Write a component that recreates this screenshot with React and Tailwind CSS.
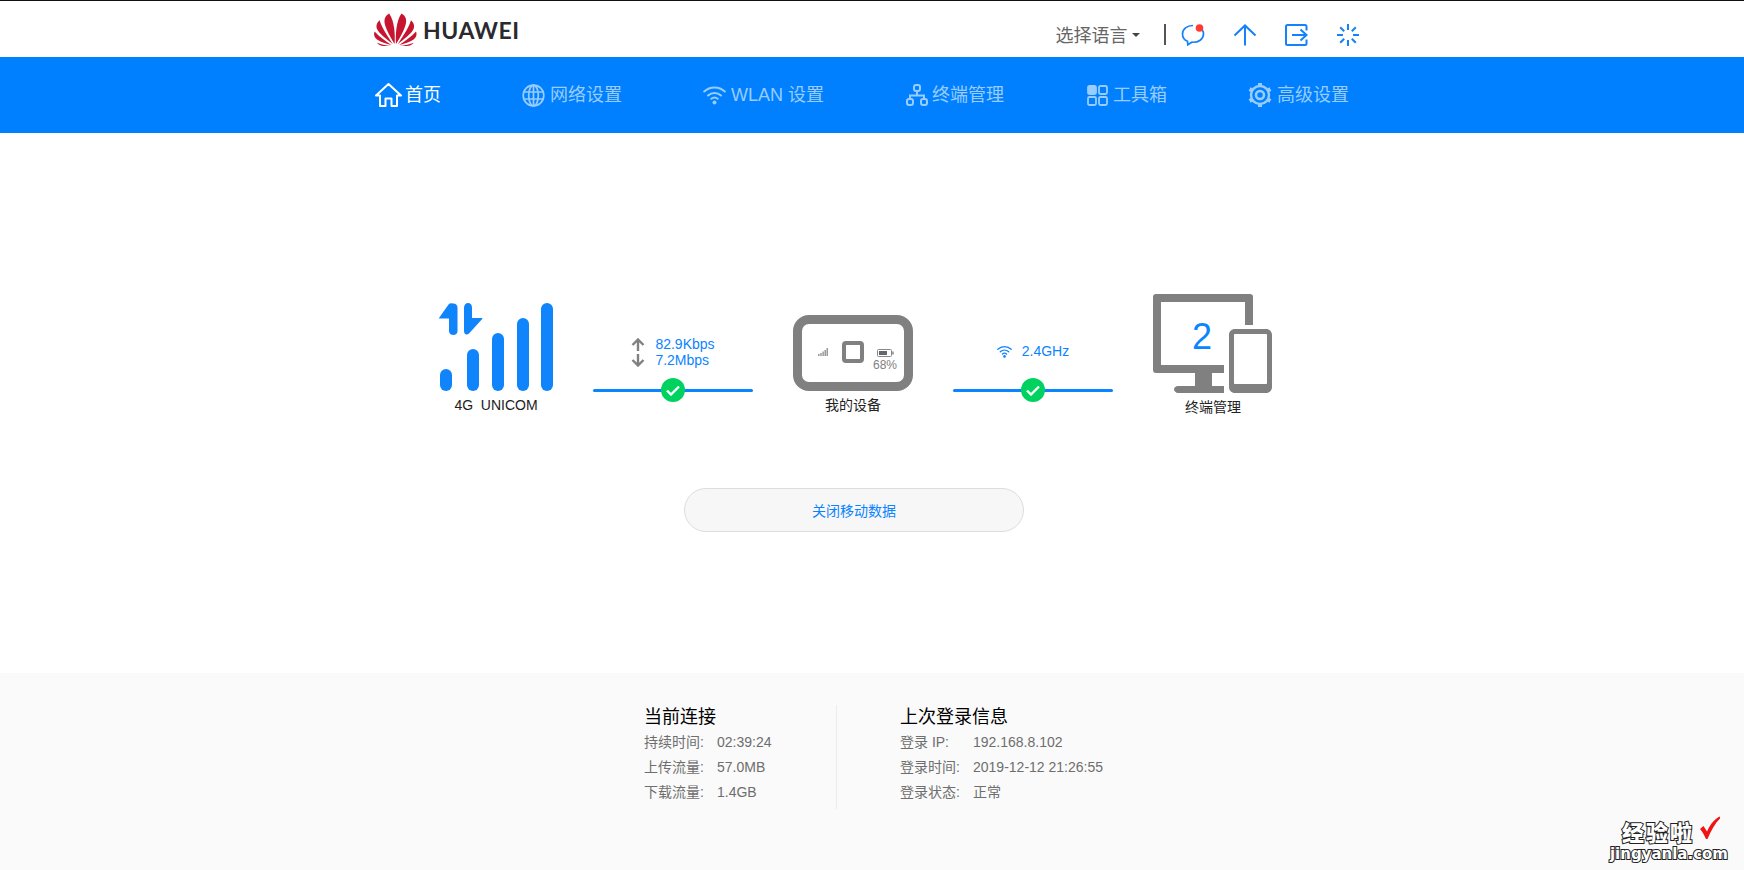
import React from "react";

const FONT = "[font-family:'Liberation_Sans','Noto_Sans_CJK_SC',sans-serif]";

const HuaweiLogo = () => (
  <svg width="43" height="33" viewBox="0 0 43 33" fill="#c7152f">
    <g>
      <path d="M20.6 31C21.2 22 20.6 8 15.2.4C12 1.8 9.7 5.5 10.7 10.5C11.8 16 17 25.500 20.600 31Z" />
      <path d="M18.800 31.200C15 25 8.500 16.500 5.600 7.300C2.800 9.600 1.600 13 3.300 16.600C5.500 21 13 26.500 18.800 31.200Z" />
      <path d="M17.400 32C12.500 28.500 5.400 24 .6 18.400C-.6 21.200.3 24.400 3 26.400C6.500 29 12.500 30.800 17.400 32Z" />
      <path d="M16.500 32.800C11.500 32.300 6.500 31.400 2.900 29.800C4.200 31.800 7 33 10 32.900C12 32.900 14.500 32.900 16.500 32.800Z" />
    </g>
    <g transform="translate(42.600 0) scale(-1 1)">
      <path d="M20.6 31C21.2 22 20.6 8 15.2.4C12 1.8 9.700 5.500 10.700 10.500C11.800 16 17 25.500 20.600 31Z" />
      <path d="M18.800 31.200C15 25 8.500 16.500 5.600 7.300C2.800 9.600 1.600 13 3.300 16.600C5.500 21 13 26.500 18.800 31.200Z" />
      <path d="M17.400 32C12.500 28.500 5.400 24 .6 18.400C-.6 21.200.3 24.400 3 26.400C6.500 29 12.500 30.800 17.400 32Z" />
      <path d="M16.500 32.800C11.500 32.300 6.500 31.400 2.900 29.800C4.200 31.800 7 33 10 32.900C12 32.900 14.500 32.900 16.500 32.800Z" />
    </g>
  </svg>
);

const HomeIcon = () => (
  <svg width="27" height="24" viewBox="0 0 27 24" fill="none" stroke="currentColor" strokeWidth="2" strokeLinejoin="round">
    <path d="M1 12.500L13.500 1L26 12.500H22V23H16.500V15.500H10.500V23H5V12.500Z" />
  </svg>
);

const GlobeIcon = () => (
  <svg width="23" height="23" viewBox="0 0 23 23" fill="none" stroke="currentColor" strokeWidth="1.700">
    <circle cx="11.500" cy="11.500" r="10.300" />
    <ellipse cx="11.500" cy="11.500" rx="4.800" ry="10.300" />
    <path d="M11.500 1.200V21.800M1.800 8H21.200M1.800 15H21.200" />
  </svg>
);

const WifiIcon = ({ size = 23 }) => (
  <svg width={size} height={size * 0.87} viewBox="0 0 23 20" fill="none" stroke="currentColor" strokeWidth="2" strokeLinecap="round">
    <path d="M1.200 6.500C7 1 16 1 21.800 6.500" />
    <path d="M5 10.500C8.800 7 14.200 7 18 10.500" />
    <path d="M8.300 13.800C10.200 12.300 12.800 12.300 14.700 13.800" />
    <circle cx="11.500" cy="17.500" r="2" fill="currentColor" stroke="none" />
  </svg>
);

const TerminalIcon = () => (
  <svg className="ml-[1px]" width="22" height="22" viewBox="0 0 22 22" fill="none" stroke="currentColor" strokeWidth="2">
    <rect x="8" y="1" width="6" height="6" rx="2" />
    <rect x="1" y="15" width="6" height="6" rx="2" />
    <rect x="15" y="15" width="6" height="6" rx="2" />
    <path d="M11 7V11.500M4 15V11.500H18V15" />
  </svg>
);

const ToolsIcon = () => (
  <svg className="ml-[2px]" width="21" height="21" viewBox="0 0 21 21" fill="none" stroke="currentColor" strokeWidth="1.800">
    <rect x="1" y="1" width="8" height="8" rx="1.500" fill="currentColor" />
    <rect x="12" y="1" width="8" height="8" rx="1.500" />
    <rect x="1" y="12" width="8" height="8" rx="1.500" />
    <rect x="12" y="12" width="8" height="8" rx="1.500" />
  </svg>
);

const GearIcon = () => (
  <svg width="24" height="24" viewBox="0 0 24 24" fill="none" stroke="currentColor">
    <circle cx="12" cy="12" r="9" strokeWidth="2.400" />
    <circle cx="12" cy="12" r="4" strokeWidth="2.600" />
    <path strokeWidth="4" d="M12 0V3.500M12 20.500V24M1.600 6L4.600 7.700M19.400 16.300L22.400 18M1.600 18L4.600 16.300M19.400 7.700L22.400 6" />
  </svg>
);

const navItems = [
  { label: "首页", icon: <HomeIcon />, active: true, gap: "gap-[3px]" },
  { label: "网络设置", icon: <GlobeIcon />, gap: "gap-[5px]" },
  { label: "WLAN 设置", icon: <WifiIcon />, gap: "gap-[5px]" },
  { label: "终端管理", icon: <TerminalIcon />, gap: "gap-[4px]" },
  { label: "工具箱", icon: <ToolsIcon />, gap: "gap-[5px]" },
  { label: "高级设置", icon: <GearIcon />, gap: "gap-[5px]" },
];

const Header = () => (
  <header className="h-[57px] border-t border-[#111] bg-white">
    <div className="mx-auto flex h-[56px] w-[996px] items-center">
      <div className="flex items-center gap-[6px]">
        <HuaweiLogo />
        <span className="mt-[3px] font-['Lato',sans-serif] text-[23px] leading-none font-bold tracking-[0.5px] text-[#2a2a2e]">HUAWEI</span>
      </div>
      <div className="mt-[11px] ml-[536px] flex items-center">
        <span className="mt-[3px] text-[18px] text-[#666]">选择语言</span>
        <span className="mt-[1px] ml-[5px] h-0 w-0 border-x-[4px] border-t-[4px] border-x-transparent border-t-[#444]" />
        <span className="mt-[-1px] ml-[24px] h-[21px] w-[2px] bg-[#555]" />
        <div className="ml-[15px] flex items-center gap-[28px] text-[#1482fa]">
          <svg width="24" height="22" viewBox="0 0 24 22" fill="none" stroke="currentColor" strokeWidth="1.700">
            <path d="M12 1.500C6 1.500 1.500 5 1.500 10C1.500 13.500 3.500 16 6.500 17.300L6.800 20.800L10.800 18.200C17.500 18.800 22.500 15 22.500 10C22.500 8.500 22 7 21.300 6" />
            <circle cx="18.500" cy="4" r="3.800" fill="#ff3b30" stroke="none" />
          </svg>
          <svg width="24" height="22" viewBox="0 0 24 22" fill="none" stroke="currentColor" strokeWidth="2">
            <path d="M12 21.500V1.500M1.500 11.500L12 1.500L22.500 11.500" />
          </svg>
          <svg width="23" height="22" viewBox="0 0 23 22" fill="none" stroke="currentColor" strokeWidth="2">
            <path d="M21.500 6.500V2.500C21.500 1.700 21 1 20 1H2.500C1.700 1 1 1.700 1 2.500V19.500C1 20.300 1.700 21 2.500 21H20C21 21 21.500 20.300 21.500 19.500V15.500" />
            <path d="M7 11H21.500M15.500 5.500L21.500 11L15.500 16.500" />
          </svg>
          <svg className="ml-[1px]" width="22" height="22" viewBox="0 0 22 22" fill="none" stroke="currentColor" strokeWidth="2">
            <path d="M11 0V6M11 16V22M0 11H6M16 11H22M3.200 3.200L7.200 7.200M14.800 14.800L18.800 18.800M3.200 18.800L7.200 14.800M14.800 7.200L18.800 3.200" />
          </svg>
        </div>
      </div>
    </div>
  </header>
);

const Nav = () => (
  <nav className="h-[76px] bg-[#0080ff]">
    <div className="mx-auto flex h-full w-[996px] items-center gap-[81px] pl-[1px]">
      {navItems.map((item) => (
        <div
          key={item.label}
          className={`flex items-center ${item.gap} text-[18px] whitespace-nowrap ${item.active ? "text-white" : "text-[#99ccff]"}`}
        >
          {item.icon}
          <span>{item.label}</span>
        </div>
      ))}
    </div>
  </nav>
);

const SignalIcon = () => (
  <svg width="115" height="88" viewBox="0 0 115 88" fill="#1084fb">
    <path d="M0 15L9.500 1.500C10.500 .3 12 0 13.500.5C16.500 0 18.500 2 18.500 4.500V28C18.500 30.500 16.500 32 14.500 32C12 32 10 30.500 10 28V15.500H1C0 15.500-.3 15.200 0 15Z" />
    <path d="M25 4.500C25 2 27 0 29 0C31.500 0 33 2 33 4.500V15H43C43.500 15 43.500 15.500 43.200 16L30 30.500C28.500 32 25 32 25 28Z" />
    <rect x="1" y="66" width="12" height="22" rx="6" />
    <rect x="28" y="46" width="12" height="42" rx="6" />
    <rect x="53" y="30" width="12" height="58" rx="6" />
    <rect x="78" y="15" width="12" height="73" rx="6" />
    <rect x="102" y="0" width="12" height="88" rx="6" />
  </svg>
);

const LinkLine = ({ children }) => (
  <div className="w-[160px]">
    <div className="flex h-[46px] items-center justify-center">{children}</div>
    <div className="relative mt-[14px] h-[3px] rounded-full bg-[#0a84ff]">
      <span className="absolute top-[-11px] left-[68px] flex h-6 w-6 items-center justify-center rounded-full bg-[#00d25f]">
        <svg width="14" height="11" viewBox="0 0 14 11" fill="none" stroke="#fff" strokeWidth="2.400">
          <path d="M1 5.500L5 9.500L13 1.500" />
        </svg>
      </span>
    </div>
  </div>
);

const StatusRow = () => (
  <div className="flex items-start">
    <div className="flex w-[114px] flex-col items-center pt-[9px]">
      <SignalIcon />
      <span className="mt-[4px] text-[14px] whitespace-pre text-[#222]">4G  UNICOM</span>
    </div>

    <div className="ml-[40px] pt-[35px]">
      <LinkLine>
        <div className="grid grid-cols-[auto_auto] items-center gap-x-[10px] text-[14px] leading-[16px] text-[#0a84ff]">
          <svg width="14" height="13" viewBox="0 0 14 13" fill="none" stroke="#808080" strokeWidth="2.400">
            <path d="M7 13V2M1.500 7L7 1.500L12.500 7" />
          </svg>
          <span>82.9Kbps</span>
          <svg width="14" height="13" viewBox="0 0 14 13" fill="none" stroke="#808080" strokeWidth="2.400">
            <path d="M7 0V11M1.500 6L7 11.500L12.500 6" />
          </svg>
          <span>7.2Mbps</span>
        </div>
      </LinkLine>
    </div>

    <div className="ml-[40px] flex flex-col items-center pt-[21px]">
      <div className="flex h-[76px] w-[120px] items-center rounded-[16px] border-[9px] border-[#808080] pl-[16px]">
        <svg className="mt-[-3px]" width="10" height="8" viewBox="0 0 10 8" fill="#999">
          <rect x="0" y="6" width="1.500" height="2" />
          <rect x="2.200" y="5" width="1.500" height="3" />
          <rect x="4.400" y="3.500" width="1.500" height="4.500" />
          <rect x="6.500" y="2" width="1.500" height="6" />
          <rect x="8.500" y="0" width="1.500" height="8" />
        </svg>
        <span className="mt-[-3px] ml-[14px] h-[22px] w-[22px] rounded-[4px] border-[4px] border-[#808080]" />
        <div className="mt-[16px] ml-[9px] flex flex-col items-center">
          <svg width="17" height="8" viewBox="0 0 17 8" fill="none">
            <rect x=".5" y=".5" width="14" height="7" rx="1" stroke="#888" />
            <rect x="2" y="2" width="8" height="4" fill="#666" />
            <rect x="15.200" y="2.500" width="1.500" height="3" fill="#888" />
          </svg>
          <span className="text-[12px] leading-[16px] text-[#808080]">68%</span>
        </div>
      </div>
      <span className="mt-[4px] text-[14px] text-[#222]">我的设备</span>
    </div>

    <div className="ml-[40px] pt-[35px]">
      <LinkLine>
        <div className="mt-[-1px] flex items-center gap-[10px] text-[14px] text-[#0a84ff]">
          <WifiIcon size={15} />
          <span>2.4GHz</span>
        </div>
      </LinkLine>
    </div>

    <div className="relative ml-[40px] flex flex-col items-center">
      <svg width="120" height="100" viewBox="0 0 120 100" fill="#808080">
        <path d="M3 0H97C99 0 100 1 100 3V31H92V8H8V71H71V79H59V92H71V99H25C23 99 21 97 21 95.500C21 93.500 23 92 25 92H42V79H3C1 79 0 78 0 76V3C0 1 1 0 3 0Z" />
        <path fillRule="evenodd" d="M82 35H113C116.500 35 119 37.500 119 41V93C119 96.500 116.500 99 113 99H82C78.500 99 76 96.500 76 93V41C76 37.500 78.500 35 82 35ZM82 40C81.400 40 81 40.400 81 41V89C81 89.600 81.400 90 82 90H113C113.600 90 114 89.600 114 89V41C114 40.400 113.600 40 113 40Z" />
      </svg>
      <span className="absolute top-[19px] left-[39px] text-[36px] leading-[48px] text-[#0a84ff]">2</span>
      <span className="mt-[3px] text-[14px] text-[#222]">终端管理</span>
    </div>
  </div>
);

const Main = () => (
  <main className="flex-1 bg-white pt-[161px] pl-[439px]">
    <div className="w-[830px]">
      <StatusRow />
      <button className="mx-auto mt-[70px] flex h-[44px] w-[340px] items-center justify-center rounded-full border border-[#ddd] bg-[#f7f7f7] pt-[2px] text-[14px] text-[#0a84ff]">
        关闭移动数据
      </button>
    </div>
  </main>
);

const connectionRows = [
  ["持续时间:", "02:39:24"],
  ["上传流量:", "57.0MB"],
  ["下载流量:", "1.4GB"],
];

const loginRows = [
  ["登录 IP:", "192.168.8.102"],
  ["登录时间:", "2019-12-12 21:26:55"],
  ["登录状态:", "正常"],
];

const InfoBlock = ({ title, rows }) => (
  <div>
    <h3 className="text-[18px] leading-[26px] text-black">{title}</h3>
    <div className="grid grid-cols-[73px_auto] text-[14px] leading-[25px] text-[#6e6e6e]">
      {rows.map(([k, v]) => (
        <React.Fragment key={k}>
          <span>{k}</span>
          <span>{v}</span>
        </React.Fragment>
      ))}
    </div>
  </div>
);

const Footer = () => (
  <footer className="relative h-[197px] bg-[#fafafa]">
    <div className="mx-auto flex w-[456px] pt-[31px]">
      <div className="w-[192px] shrink-0">
        <InfoBlock title="当前连接" rows={connectionRows} />
      </div>
      <div className="mt-[1px] h-[104px] w-px shrink-0 bg-[#ececec]" />
      <div className="ml-[63px] shrink-0 whitespace-nowrap">
        <InfoBlock title="上次登录信息" rows={loginRows} />
      </div>
    </div>
    {/* 水印 */}
    <div className="absolute right-[16px] bottom-[7px] flex flex-col items-end font-['Noto_Sans_CJK_SC','Liberation_Sans',sans-serif] font-black text-white">
      <div className="flex h-[24px] items-center">
        <span className="text-[22px] leading-[22px] tracking-[2px] [-webkit-text-stroke:2px_#222] [paint-order:stroke_fill]">经验啦</span>
        <svg className="mt-[-6px] mb-[2px] ml-[6px]" width="20" height="23" viewBox="0 0 20 23" fill="#f01414">
          <path d="M0 13L3.500 10L7 15.500C10 9 14 3 20 .5V2.500C15 7.500 11 14.500 7.500 23H6C4.500 19.500 2.500 16 0 13Z" />
        </svg>
        <span className="w-[8px]" />
      </div>
      <span className="mt-[2px] font-['DejaVu_Sans',sans-serif] text-[15px] leading-[18px] font-bold [-webkit-text-stroke:2px_#222] [paint-order:stroke_fill]">jingyanla.com</span>
    </div>
  </footer>
);

export default function App() {
  return (
    <div className={`flex h-screen min-h-[870px] flex-col overflow-hidden ${FONT}`}>
      <Header />
      <Nav />
      <Main />
      <Footer />
    </div>
  );
}
